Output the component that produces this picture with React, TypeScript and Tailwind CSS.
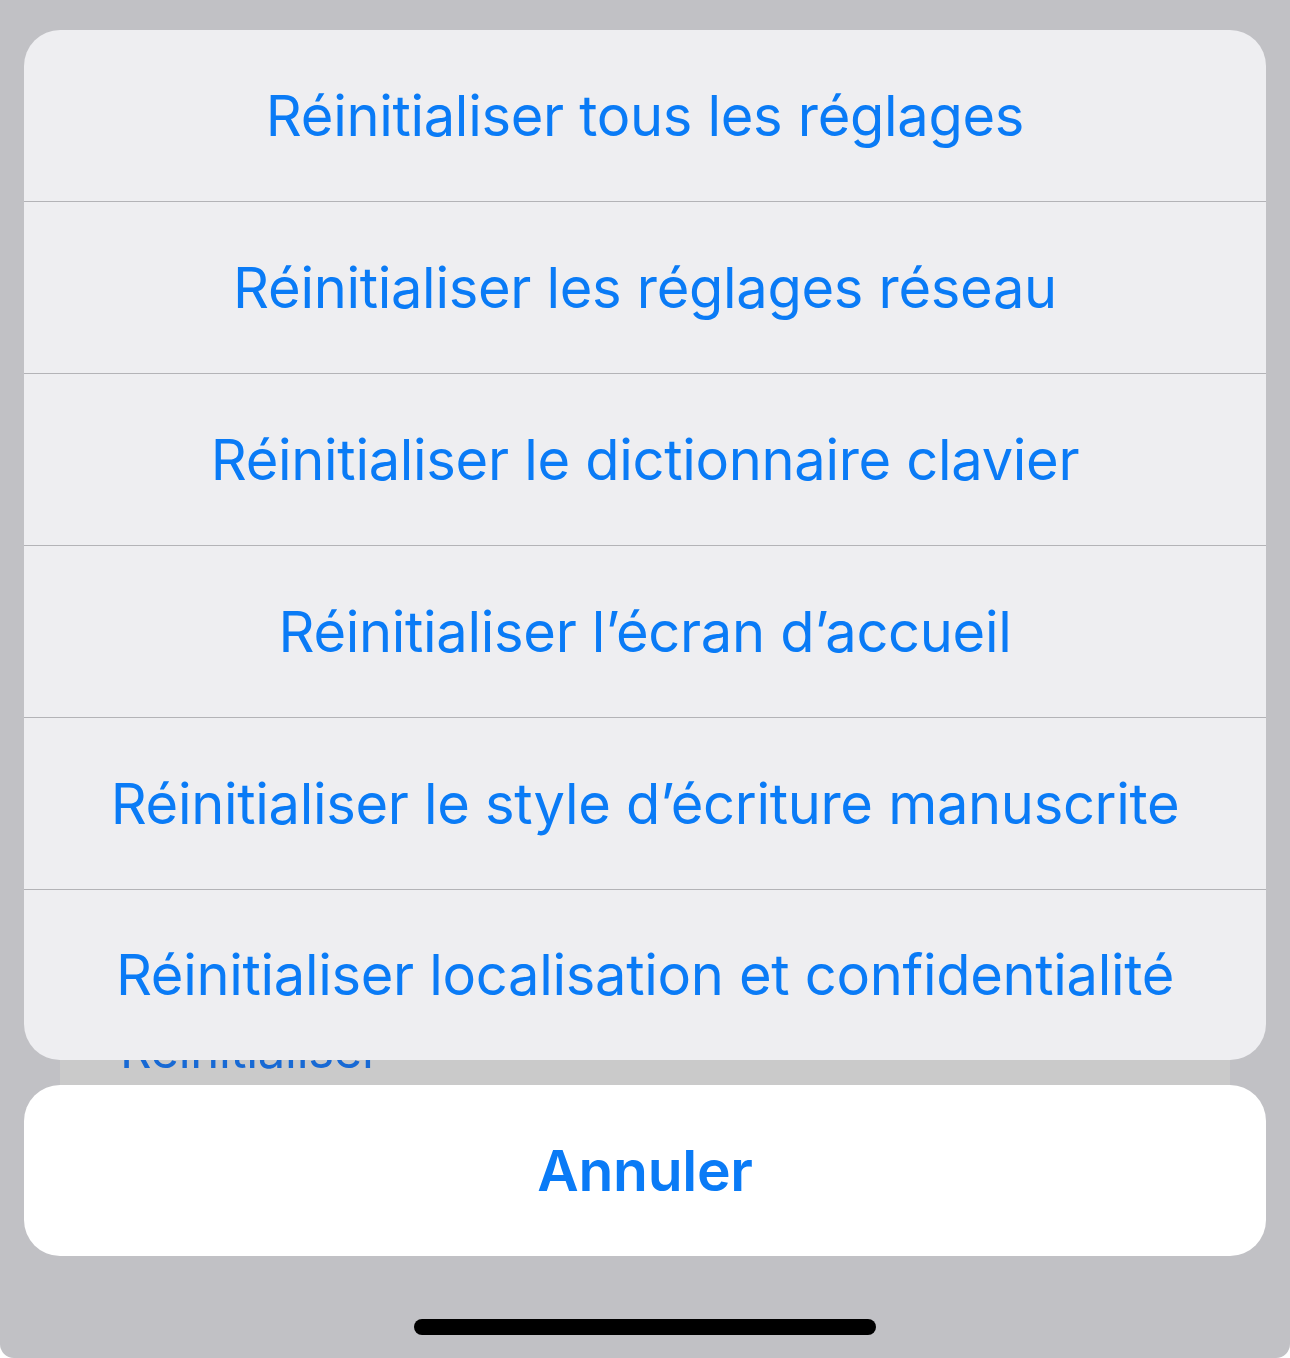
import React from "react";

const actions = [
  "Réinitialiser tous les réglages",
  "Réinitialiser les réglages réseau",
  "Réinitialiser le dictionnaire clavier",
  "Réinitialiser l’écran d’accueil",
  "Réinitialiser le style d’écriture manuscrite",
  "Réinitialiser localisation et confidentialité",
];

export default function App() {
  return (
    <div
      className="flex h-[1358px] w-[1290px] flex-col overflow-hidden rounded-b-[14px] bg-[#c1c1c5]"
      style={{ fontFamily: "Inter, 'Noto Sans', sans-serif" }}
    >
      <div className="px-6 pt-[30px]">
        <div className="relative z-10 flex flex-col overflow-hidden rounded-[36px] bg-[#eeeef1]">
          {actions.map((label, i) => (
            <div
              key={label}
              className={`flex items-center justify-center ${
                i > 0 ? "border-t border-[#b3b3b7]" : ""
              } ${i === 0 || i === actions.length - 1 ? "h-[171px]" : "h-[172px]"}`}
            >
              <span className="text-[56px] leading-none tracking-[-0.3px] text-[#0a7bf6]">
                {label}
              </span>
            </div>
          ))}
        </div>

        {/* peek of the list behind the sheet */}
        <div className="mx-9 -mt-10 flex h-[65px] items-end overflow-hidden bg-[#cacaca] pl-[60px]">
          <span className="mb-[10px] text-[49px] leading-none tracking-[-0.3px] text-[#1769d4]">
            Réinitialiser
          </span>
        </div>

        <button
          type="button"
          className="flex h-[171px] w-full items-center justify-center rounded-[36px] bg-white"
        >
          <span className="text-[57px] font-semibold leading-none tracking-[-0.3px] text-[#0a7bf6]">
            Annuler
          </span>
        </button>
      </div>

      <div className="mt-[63px] flex justify-center">
        <div className="h-[16px] w-[462px] rounded-full bg-black" />
      </div>
    </div>
  );
}
